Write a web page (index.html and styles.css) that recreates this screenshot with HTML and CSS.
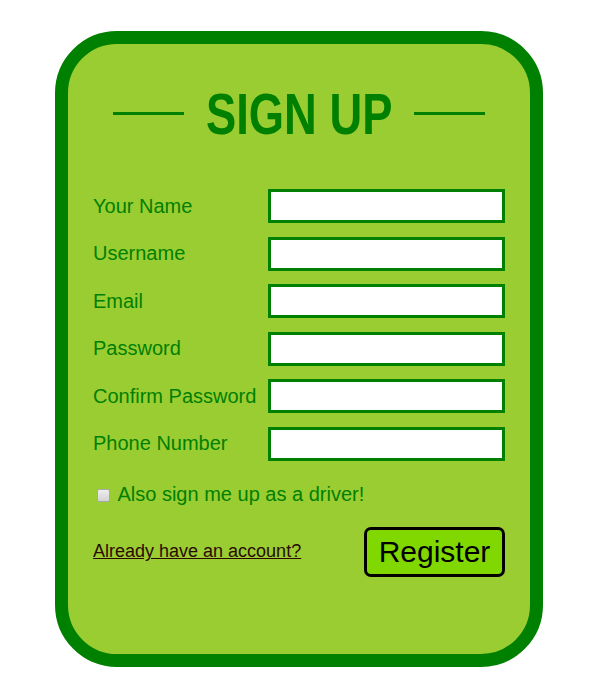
FILE: index.html
```html
<!DOCTYPE html>
<html lang="en">
<head>
<meta charset="utf-8">
<title>Sign Up</title>
<link rel="stylesheet" href="styles.css">
</head>
<body>
<form class="card">
  <div class="title-row">
    <span class="rule"></span>
    <h1 class="title"><span class="title-text">SIGN UP</span></h1>
    <span class="rule"></span>
  </div>
  <div class="fields">
    <label class="label" for="name">Your Name</label><input class="input" id="name" type="text">
    <label class="label" for="user">Username</label><input class="input" id="user" type="text">
    <label class="label" for="email">Email</label><input class="input" id="email" type="email">
    <label class="label" for="pw">Password</label><input class="input" id="pw" type="password">
    <label class="label" for="pw2">Confirm Password</label><input class="input" id="pw2" type="password">
    <label class="label" for="phone">Phone Number</label><input class="input" id="phone" type="tel">
  </div>
  <label class="driver"><input class="check" type="checkbox"> Also sign me up as a driver!</label>
  <div class="actions">
    <a class="login" href="#">Already have an account?</a>
    <button class="register" type="button">Register</button>
  </div>
</form>
</body>
</html>
```
FILE: styles.css
```css
html, body {
  margin: 0;
  padding: 0;
  background: #ffffff;
}
body {
  font-family: "Liberation Sans", Arial, sans-serif;
  padding: 31px 0 0 55px;
}
.card {
  box-sizing: border-box;
  width: 488px;
  height: 636px;
  background: #9acd32;
  border: 13px solid #008000;
  border-radius: 62px;
  padding: 42px 25px 0 25px;
}
.title-row {
  display: flex;
  align-items: center;
  justify-content: center;
  gap: 22px;
}
.rule {
  width: 71px;
  height: 3px;
  background: #008000;
  margin-top: -2px;
}
.title {
  margin: 0;
  width: 186px;
  display: flex;
  justify-content: center;
  white-space: nowrap;
  font-family: "Liberation Sans", Arial, sans-serif;
  font-weight: bold;
  font-size: 57px;
  line-height: 57px;
  color: #008000;
}
.title-text {
  display: inline-block;
  flex: none;
  transform: scaleX(0.795);
  transform-origin: center;
}
.fields {
  display: grid;
  grid-template-columns: 175px 237px;
  row-gap: 13.6px;
  margin-top: 46px;
  align-items: center;
}
.label {
  font-size: 20px;
  color: #008000;
}
.input {
  box-sizing: border-box;
  width: 237px;
  height: 34px;
  margin: 0;
  border: 3px solid #008000;
  background: #ffffff;
  font-size: 18px;
  outline: none;
}
.driver {
  display: block;
  margin-top: 22px;
  font-size: 20px;
  color: #008000;
  line-height: 23px;
}
.check {
  appearance: none;
  -webkit-appearance: none;
  box-sizing: border-box;
  width: 13px;
  height: 13px;
  margin: 0 3px 0 4px;
  vertical-align: -1px;
  border: 1px solid #a9a9a9;
  border-radius: 2px;
  background: linear-gradient(#eeeeee, #d2d2d2);
}
.actions {
  display: flex;
  justify-content: space-between;
  align-items: center;
  margin-top: 21px;
}
.login {
  font-size: 18px;
  color: #2a0a00;
  text-decoration: underline;
}
.register {
  box-sizing: border-box;
  width: 141px;
  height: 50px;
  border: 3px solid #000000;
  border-radius: 7px;
  background: #80d800;
  font-family: "Liberation Sans", Arial, sans-serif;
  font-size: 30px;
  color: #000000;
  padding: 0;
}
```
